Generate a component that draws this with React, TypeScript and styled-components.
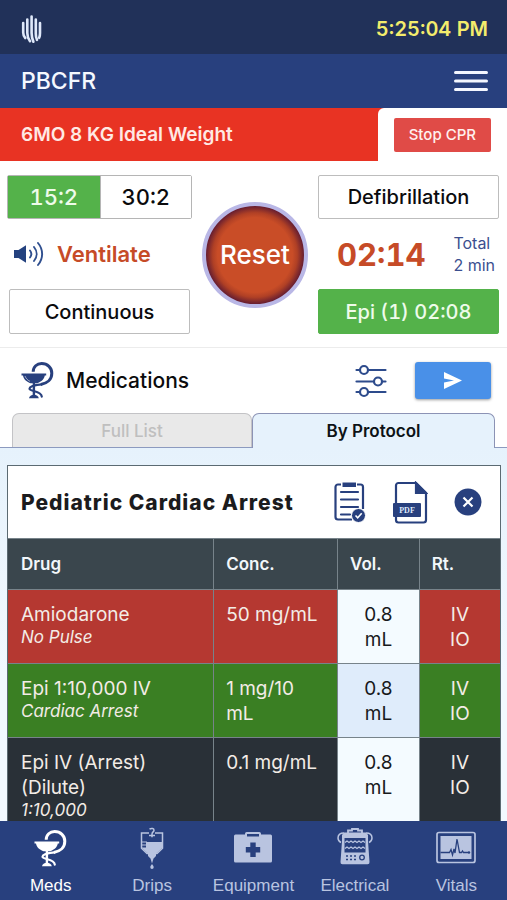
import React from "react";
import styled, { createGlobalStyle } from "styled-components";

const navy = "#213159";
const blue = "#28407e";
const rust = "#c64b27";
const green = "#54b24a";

const GlobalStyle = createGlobalStyle`
  *, *::before, *::after { box-sizing: border-box; }
  body { margin: 0; background: #fff; color: #0b0b0d; font-family: Inter, "Noto Sans", sans-serif; }
  button { font: inherit; color: inherit; margin: 0; padding: 0; border: 0; background: none; cursor: pointer; }
  h1, h2, p { margin: 0; font: inherit; }
  svg { display: block; flex: none; }
`;

const Screen = styled.div`
  display: flex;
  flex-direction: column;
  height: 100vh;
  overflow: hidden;
`;

const StatusBar = styled.header`
  display: flex;
  flex: none;
  align-items: center;
  justify-content: space-between;
  height: 54px;
  padding: 3px 19px 0 21px;
  background: ${navy};
`;

const Clock = styled.time`
  color: #f3ec6c;
  font-size: 20px;
  font-weight: 600;
  font-variant-numeric: tabular-nums;
`;

const NavBar = styled.nav`
  display: flex;
  flex: none;
  align-items: center;
  justify-content: space-between;
  height: 54px;
  padding: 0 19px 0 21px;
  background: ${blue};
`;

const AppTitle = styled.h1`
  color: #f5f8ff;
  font-size: 23px;
  font-weight: 500;
`;

const PatientBar = styled.section`
  display: flex;
  flex: none;
  height: 53px;
  background: #e83323;
`;

const PatientInfo = styled.p`
  flex: 1;
  padding-left: 21px;
  color: #ffe9e4;
  font-size: 19px;
  font-weight: 600;
  line-height: 53px;
`;

const StopBox = styled.div`
  display: flex;
  align-items: center;
  padding: 0 16px;
  border-top-left-radius: 6px;
  background: #fff;
`;

const StopButton = styled.button`
  height: 34px;
  padding: 0 15px;
  border-radius: 2px;
  background: #e04b47;
  color: #fff0ee;
  font-size: 15px;
  font-weight: 500;
`;

const CprPanel = styled.section`
  display: grid;
  flex: none;
  grid-template-columns: 185fr 106px 181fr;
  column-gap: 10px;
  padding: 14px 8px 13px 7px;
  border-bottom: 1px solid #ececec;
`;

const CprColumn = styled.div`
  display: grid;
  grid-template-rows: 44px 70px 45px;
`;

const Toggle = styled.div`
  display: grid;
  grid-template-columns: 1fr 1fr;
  border: 1px solid #b5b5b5;
  border-radius: 2px;
`;

const ToggleOption = styled.button<{ $on?: boolean }>`
  border-left: ${(p) => (p.$on ? "0" : "1px solid #b5b5b5")};
  background: ${(p) => (p.$on ? green : "#fff")};
  color: ${(p) => (p.$on ? "#eefbea" : "#0b0b0d")};
  font-size: 22px;
  font-weight: 500;
  font-variant-numeric: tabular-nums;
`;

const PanelButton = styled.button<{ $filled?: boolean; $inset?: boolean }>`
  margin: 0 ${(p) => (p.$inset ? "2px" : "0")};
  border: 1px solid ${(p) => (p.$filled ? green : "#bdbdbd")};
  border-radius: 2px;
  background: ${(p) => (p.$filled ? green : "#fff")};
  color: ${(p) => (p.$filled ? "#eefbea" : "#0b0b0d")};
  font-size: 20px;
  font-weight: 500;
  font-variant-numeric: ${(p) => (p.$filled ? "tabular-nums" : "normal")};
`;

const VentilateRow = styled.div`
  display: flex;
  align-items: center;
  gap: 13px;
  padding-left: 6px;
  color: ${rust};
  font-size: 22px;
  font-weight: 600;
`;

const ResetButton = styled.button`
  align-self: center;
  width: 106px;
  height: 106px;
  border: 4px solid #b9b7e6;
  border-radius: 50%;
  background: radial-gradient(circle, #c94d27 54%, #b04025 61%, #6b2030 70%);
  color: #fff;
  font-size: 26px;
  font-weight: 500;
`;

const TimerRow = styled.div`
  display: flex;
  align-items: center;
  justify-content: space-between;
  padding: 0 4px 0 19px;
`;

const Timer = styled.span`
  color: ${rust};
  font-size: 31px;
  font-weight: 700;
  font-variant-numeric: tabular-nums;
`;

const Total = styled.p`
  color: #3b4f8f;
  font-size: 16px;
  line-height: 22px;
`;

const SectionBar = styled.div`
  display: flex;
  flex: none;
  align-items: center;
  height: 65px;
  padding: 0 16px 0 21px;
`;

const SectionTitle = styled.h2`
  flex: 1;
  padding-left: 12px;
  font-size: 21px;
  font-weight: 500;
`;

const SendButton = styled.button`
  display: grid;
  place-items: center;
  width: 76px;
  height: 37px;
  margin-left: 28px;
  border-radius: 3px;
  background: #4990e8;
  box-shadow: 0 1px 3px rgba(0, 0, 0, 0.4);
`;

const Tabs = styled.div`
  display: flex;
  flex: none;
  padding: 0 12px;
  border-bottom: 1px solid #8c9abf;
`;

const Tab = styled.button<{ $active?: boolean }>`
  flex: ${(p) => (p.$active ? 243 : 240)} 1 0;
  height: ${(p) => (p.$active ? 35 : 34)}px;
  margin-bottom: ${(p) => (p.$active ? "-1px" : "0")};
  border: 1px solid ${(p) => (p.$active ? "#8c93b5" : "#c3c3c6")};
  border-bottom: 0;
  border-radius: 7px 7px 0 0;
  background: ${(p) => (p.$active ? "#e6f2fc" : "#e9e9e9")};
  color: ${(p) => (p.$active ? "#0d1216" : "#bfbfbf")};
  font-size: 17px;
  font-weight: ${(p) => (p.$active ? 600 : 500)};
`;

const Content = styled.main`
  flex: 1;
  min-height: 0;
  overflow: hidden;
  padding: 17px 6px 0 7px;
  background: linear-gradient(#e6f2fc, #f2f9ff 60%);
`;

const Card = styled.section`
  border: 1px solid #5b6a72;
  background: #fff;
`;

const CardHead = styled.div`
  display: flex;
  align-items: center;
  height: 72px;
  padding: 0 18px 0 13px;
  gap: 26px;
`;

const CardTitle = styled.h2`
  flex: 1;
  color: #1b1b1d;
  font-size: 21px;
  font-weight: 800;
  letter-spacing: 1px;
  white-space: nowrap;
`;

const DrugTable = styled.table`
  width: 100%;
  border-collapse: collapse;
  table-layout: fixed;

  th, td {
    padding: 12px 12px 11px;
    border-top: 1px solid #77838a;
    text-align: left;
    vertical-align: top;
  }
  th + th, td + td { border-left: 1px solid #77838a; }
  th:first-child, td:first-child { padding-left: 13px; }
`;

const Col = styled.col<{ $share: number }>`
  width: ${(p) => p.$share}%;
`;

const HeadCell = styled.th`
  && { vertical-align: middle; }
  height: 51px;
  background: #3a464d;
  color: #f2f7fa;
  font-size: 17px;
  font-weight: 600;
  line-height: 25px;
`;

const tones = { red: "#b53831", green: "#3a7f23", dark: "#293037" };
type Tone = keyof typeof tones;

const DrugRow = styled.tr<{ $tone: Tone }>`
  background: ${(p) => tones[p.$tone]};
  color: #f3ece6;
  font-size: 19px;
  line-height: 25px;
`;

const VolumeCell = styled.td<{ $tinted: boolean }>`
  && { text-align: center; }
  background: ${(p) => (p.$tinted ? "#dfecfb" : "#f4fbff")};
  color: #17191c;
`;

const RouteCell = styled.td`
  && { text-align: center; }
`;

const Note = styled.em`
  display: block;
  font-size: 17px;
  line-height: 21px;
`;

const TabBar = styled.nav`
  display: grid;
  flex: none;
  grid-template-columns: repeat(5, 1fr);
  height: 79px;
  background: ${blue};
`;

const TabBarItem = styled.button<{ $active?: boolean }>`
  display: flex;
  flex-direction: column;
  align-items: center;
  padding-top: 6px;
  gap: 4px;
  color: ${(p) => (p.$active ? "#ffffff" : "#b9c4e0")};
  font-family: "Liberation Sans", Arial, sans-serif;
  font-size: 17px;
  line-height: 24px;
`;

const BrandMark = () => (
  <svg width="22" height="30" viewBox="0 0 22 30" fill="none" stroke="#dfe8fa" strokeWidth="2.6" strokeLinecap="round" aria-hidden="true">
    <path d="M2.200 9v9.500c0 2.300.8 4 2 5.500M6.300 5.500v13.500c0 3.500 1 6 2.700 8.200M10.600 2.500v16.500c0 3.200.7 6 1.800 8.700M14.800 5.500v14c0 2.500.3 4.500 1.200 6.300M19 9v10c0 2-.2 3.500-.8 4.800" />
  </svg>
);

const MenuIcon = () => (
  <svg width="34" height="22" viewBox="0 0 34 22" stroke="#f3f6ff" strokeWidth="3" strokeLinecap="round" aria-hidden="true">
    <path d="M1.500 2.500h31M1.500 11h31M1.500 19.500h31" />
  </svg>
);

const SpeakerIcon = () => (
  <svg width="31" height="26" viewBox="0 0 31 26" fill="none" stroke="#2f4f8f" strokeWidth="1.900" strokeLinecap="round" aria-hidden="true">
    <path d="M1 9h4.500L13 4.300v17.400L5.500 17H1z" fill="#24427f" stroke="none" />
    <path d="M17 9.500c1.700 2.200 1.700 4.800 0 7M21 6c3.500 4.300 3.500 9.700 0 14M25 2c5.500 6.500 5.500 15.500 0 22" />
  </svg>
);

const HygieiaIcon = () => (
  <svg width="33" height="37" viewBox="0 0 33 37" fill="none" stroke="currentColor" aria-hidden="true">
    <path d="M12.200 9.800C12.200 4.600 16 1.600 20.600 1.600c6 0 10.200 4.200 10.200 9.600 0 6.200-4.600 10.300-11 11.200" strokeWidth="3" />
    <path d="M20.500 22.300c-5 .5-12 2-12 4.400 0 2.800 11.800 1.800 12.300 8" strokeWidth="2.200" strokeLinecap="round" />
    <path d="M.5 11.600h24.700v2h-1.400c-.7 4-4 6.700-7.700 7.600H9.600C6 20.300 2.700 17.600 2 13.600H.5z" fill="currentColor" stroke="none" />
    <path d="M4 14c1 2.700 2.900 4.400 5 5.300" stroke="#fff" strokeOpacity=".55" strokeWidth="1" />
    <path d="M12.900 20v14" strokeWidth="2.400" />
    <path d="M8 36.200c.4-2.300 2.300-3.500 4.900-3.500s4.500 1.200 4.900 3.500z" fill="currentColor" stroke="none" />
  </svg>
);

const SlidersIcon = () => (
  <svg width="32" height="34" viewBox="0 0 32 34" fill="#fff" stroke="#2d4b8c" strokeWidth="2.200" strokeLinecap="round" aria-hidden="true">
    <path d="M1.500 6h29M1.500 17.500h29M1.500 28h29" />
    <circle cx="9" cy="6" r="4" />
    <circle cx="23" cy="17.500" r="4" />
    <circle cx="9" cy="28" r="4" />
  </svg>
);

const SendIcon = () => (
  <svg width="18" height="17" viewBox="0 0 18 17" fill="#fff" aria-hidden="true">
    <path d="M0 0l18 8.500L0 17V10.600l10-2.100-10-2.100z" />
  </svg>
);

const ChecklistIcon = () => (
  <svg width="32" height="42" viewBox="0 0 32 42" fill="none" stroke={blue} strokeWidth="2.200" aria-hidden="true">
    <path d="M7 3.500H4a2.500 2.500 0 0 0-2.500 2.500v30A2.500 2.500 0 0 0 4 38.500h14M23 3.500h3.500A2.500 2.500 0 0 1 29 6v22" />
    <path d="M8.500 1.500h13.500v4.500H8.500z" fill={blue} stroke="none" />
    <path d="M7 11h17M7 18.500h17M7 26h17M7 33.500h9" strokeLinecap="round" />
    <circle cx="24.500" cy="34.500" r="7" fill={blue} stroke="#fff" strokeWidth="1" />
    <path d="M21.500 34.500l2.200 2.300 4-4.500" stroke="#fff" strokeWidth="1.600" />
  </svg>
);

const PdfIcon = () => (
  <svg width="36" height="43" viewBox="0 0 36 43" fill="none" stroke={blue} strokeWidth="2.200" aria-hidden="true">
    <path d="M4 22V4.500A2.500 2.500 0 0 1 6.500 2H24l10 10v27a2.500 2.500 0 0 1-2.500 2.500h-25A2.500 2.500 0 0 1 4 39v-4" />
    <path d="M24 2v10h10z" fill={blue} />
    <path d="M2 22h26a1 1 0 0 1 1 1v12a1 1 0 0 1-1 1H2a1 1 0 0 1-1-1V23a1 1 0 0 1 1-1z" fill={blue} stroke="none" />
    <text x="15" y="32" fill="#dfe8fa" stroke="none" textAnchor="middle" fontFamily="Liberation Serif, serif" fontWeight="700" fontSize="8">PDF</text>
  </svg>
);

const CloseIcon = () => (
  <svg width="28" height="28" viewBox="0 0 28 28" aria-hidden="true">
    <circle cx="14" cy="14" r="13.500" fill={blue} />
    <path d="M9.500 9.500l9 9M18.500 9.500l-9 9" stroke="#fff" strokeWidth="2.200" />
  </svg>
);

const DripIcon = () => (
  <svg width="24" height="43" viewBox="0 0 24 43" fill="none" stroke="currentColor" strokeWidth="1.500" aria-hidden="true">
    <path d="M9.500 2.200c2-1.500 4.500-.7 4.500 1 0 1.800-2 1.600-2 4v3M9 8.500h6" />
    <path d="M9 6H1.500v15.300L7 26.500h10l5.500-5.200V6H15" />
    <path d="M6 15h16v6l-5.300 5H7.300L2 21v-.500h4z" fill="currentColor" stroke="none" />
    <path d="M2 15h5M2 18h5" strokeWidth="1.200" />
    <path d="M8 26h8v3l-2.500 2.500L12 36.500l-1.500-5L8 29z" fill="currentColor" stroke="none" />
    <path d="M12 37c1 1.500 1.700 2.300 1.700 3.300a1.700 1.700 0 0 1-3.400 0c0-1 .7-1.800 1.700-3.300z" fill="currentColor" stroke="none" />
  </svg>
);

const KitIcon = () => (
  <svg width="40" height="43" viewBox="0 0 40 43" aria-hidden="true">
    <path d="M2.500 7.500H12V6.700A1.700 1.700 0 0 1 13.700 5h12.600A1.700 1.700 0 0 1 28 6.700v.8h9.500A1.500 1.500 0 0 1 39 9v25a1.500 1.500 0 0 1-1.500 1.500h-35A1.500 1.500 0 0 1 1 34V9a1.500 1.500 0 0 1 1.500-1.500z" fill="currentColor" />
    <path d="M14 7h12v2.500H14z" fill={blue} />
    <path d="M17.300 15.500h5.400V20h4.500v5.400h-4.500V30h-5.400v-4.600h-4.500V20h4.500z" fill={blue} />
  </svg>
);

const MonitorIcon = () => (
  <svg width="36" height="43" viewBox="0 0 36 43" fill="none" stroke="currentColor" aria-hidden="true">
    <path d="M7 6C2 6 1 8.500 1 11c0 2 1 3.500 3 4.500M29 6c5 0 6 2.500 6 5 0 2-1 3.500-3 4.500" strokeWidth="1.500" />
    <path d="M11 6V3.500h4V2h6v1.500h4V6" strokeWidth="1.800" />
    <path d="M7 5.500h22l2 2.500v6l1.500 21a2 2 0 0 1-2 2.200h-25a2 2 0 0 1-2-2.200L5 14V8z" fill="currentColor" stroke="none" />
    <path d="M7.500 11h21v14.500h-21z" fill={blue} stroke="none" />
    <path d="M8 15.500l2-1.500 2 1.500 2-1.500 2 1.500 2-1.500 2 1.500 2-1.500 2 1.500 2-1.500 2 1.500M8 21.500l2-1.500 2 1.500 2-1.500 2 1.500 2-1.500 2 1.500 2-1.500 2 1.500 2-1.500 2 1.500" strokeWidth="1.200" />
    <path d="M9 29h2m2 0h2m2 0h2M9 32.500h2m2 0h2m2 0h2" stroke={blue} strokeWidth="1.500" />
    <circle cx="25" cy="30.500" r="2.300" fill="currentColor" stroke={blue} strokeWidth="1.300" />
  </svg>
);

const VitalsIcon = () => (
  <svg width="40" height="43" viewBox="0 0 40 43" fill="none" aria-hidden="true">
    <rect x="1" y="5.500" width="38" height="30" rx="2" stroke="currentColor" strokeWidth="1.700" />
    <rect x="4.500" y="9" width="31" height="23" fill="currentColor" />
    <path d="M4.500 25.500h9l1.500-3 1.500 5.500 1.500-6 1 4 2-14 2.500 13.500h2l1-1.500 1 1.500h5" stroke={blue} strokeWidth="1.300" />
    <circle cx="33" cy="25.500" r="1.200" fill={blue} />
  </svg>
);

type Drug = { name: string; note: string; conc: string; vol: string; tone: Tone };

const drugs: Drug[] = [
  { name: "Amiodarone", note: "No Pulse", conc: "50 mg/mL", vol: "0.8", tone: "red" },
  { name: "Epi 1:10,000 IV", note: "Cardiac Arrest", conc: "1 mg/10 mL", vol: "0.8", tone: "green" },
  { name: "Epi IV (Arrest) (Dilute)", note: "1:10,000", conc: "0.1 mg/mL", vol: "0.8", tone: "dark" },
];

const sections = [
  { label: "Meds", icon: <HygieiaIcon /> },
  { label: "Drips", icon: <DripIcon /> },
  { label: "Equipment", icon: <KitIcon /> },
  { label: "Electrical", icon: <MonitorIcon /> },
  { label: "Vitals", icon: <VitalsIcon /> },
];

const IconSlot = styled.span`
  display: grid;
  place-items: center;
  height: 43px;
`;

const SectionIcon = styled.span`
  color: ${blue};
`;

export default function App() {
  return (
    <Screen>
      <GlobalStyle />
      <StatusBar>
        <BrandMark />
        <Clock>5:25:04 PM</Clock>
      </StatusBar>
      <NavBar>
        <AppTitle>PBCFR</AppTitle>
        <button type="button" aria-label="Menu"><MenuIcon /></button>
      </NavBar>
      <PatientBar>
        <PatientInfo>6MO 8 KG Ideal Weight</PatientInfo>
        <StopBox><StopButton type="button">Stop CPR</StopButton></StopBox>
      </PatientBar>

      <CprPanel>
        <CprColumn>
          <Toggle role="group" aria-label="Compression ratio">
            <ToggleOption type="button" $on aria-pressed="true">15:2</ToggleOption>
            <ToggleOption type="button" aria-pressed="false">30:2</ToggleOption>
          </Toggle>
          <VentilateRow><SpeakerIcon />Ventilate</VentilateRow>
          <PanelButton type="button" $inset>Continuous</PanelButton>
        </CprColumn>
        <ResetButton type="button">Reset</ResetButton>
        <CprColumn>
          <PanelButton type="button">Defibrillation</PanelButton>
          <TimerRow>
            <Timer>02:14</Timer>
            <Total>Total<br />2 min</Total>
          </TimerRow>
          <PanelButton type="button" $filled>Epi (1) 02:08</PanelButton>
        </CprColumn>
      </CprPanel>

      <SectionBar>
        <SectionIcon><HygieiaIcon /></SectionIcon>
        <SectionTitle>Medications</SectionTitle>
        <button type="button" aria-label="Filters"><SlidersIcon /></button>
        <SendButton type="button" aria-label="Send"><SendIcon /></SendButton>
      </SectionBar>
      <Tabs role="tablist">
        <Tab type="button" role="tab" aria-selected="false">Full List</Tab>
        <Tab type="button" role="tab" aria-selected="true" $active>By Protocol</Tab>
      </Tabs>

      <Content>
        <Card>
          <CardHead>
            <CardTitle>Pediatric Cardiac Arrest</CardTitle>
            <button type="button" aria-label="Checklist"><ChecklistIcon /></button>
            <button type="button" aria-label="Open document"><PdfIcon /></button>
            <button type="button" aria-label="Close"><CloseIcon /></button>
          </CardHead>
          <DrugTable>
            <colgroup>
              <Col $share={41.8} /><Col $share={25.2} /><Col $share={16.6} /><Col $share={16.4} />
            </colgroup>
            <thead>
              <tr>
                <HeadCell scope="col">Drug</HeadCell>
                <HeadCell scope="col">Conc.</HeadCell>
                <HeadCell scope="col">Vol.</HeadCell>
                <HeadCell scope="col">Rt.</HeadCell>
              </tr>
            </thead>
            <tbody>
              {drugs.map((d, i) => (
                <DrugRow key={d.name} $tone={d.tone}>
                  <td>{d.name}<Note>{d.note}</Note></td>
                  <td>{d.conc}</td>
                  <VolumeCell $tinted={i % 2 === 1}>{d.vol}<br />mL</VolumeCell>
                  <RouteCell>IV<br />IO</RouteCell>
                </DrugRow>
              ))}
            </tbody>
          </DrugTable>
        </Card>
      </Content>

      <TabBar aria-label="Sections">
        {sections.map((s, i) => (
          <TabBarItem key={s.label} type="button" $active={i === 0} aria-current={i === 0 ? "page" : undefined}>
            <IconSlot>{s.icon}</IconSlot>
            {s.label}
          </TabBarItem>
        ))}
      </TabBar>
    </Screen>
  );
}
